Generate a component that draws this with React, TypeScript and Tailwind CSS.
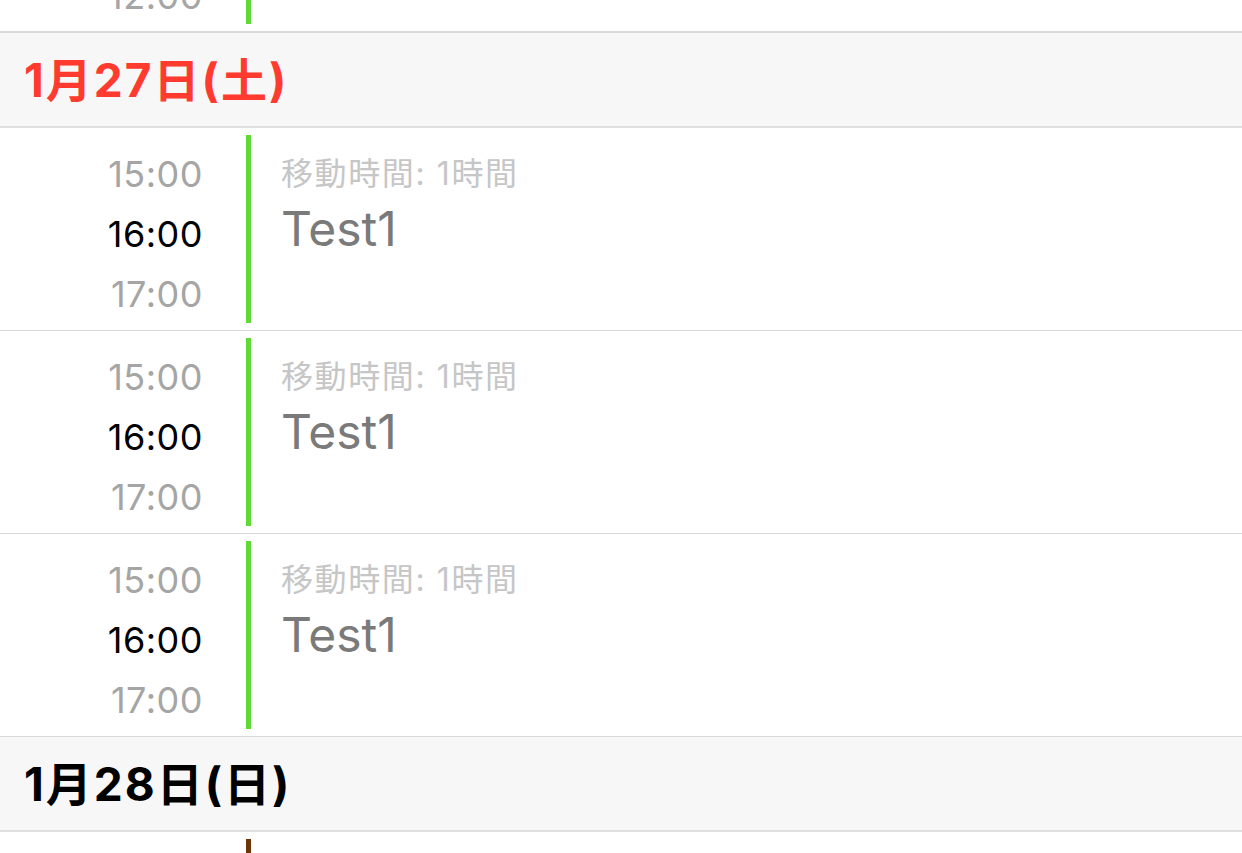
const FONT = { fontFamily: 'Inter, "Noto Sans CJK JP", sans-serif' };

type Event = {
  times: [string, string, string];
  travel: string;
  title: string;
  color: string;
};

const EventRow = ({ ev, className = "" }: { ev: Event; className?: string }) => (
  <div className={`flex h-[203px] bg-white border-b border-[#d9d9d9] ${className}`}>
    <div className="w-[203px] shrink-0 pt-[16px] text-right text-[36px] leading-[60px] tracking-[0.5px]">
      <div className="text-[#a5a5a5]">{ev.times[0]}</div>
      <div className="text-black">{ev.times[1]}</div>
      <div className="text-[#a5a5a5]">{ev.times[2]}</div>
    </div>
    <div className="ml-[43px] py-[7px]">
      <div className={`h-full w-[5px] ${ev.color}`} />
    </div>
    <div className="ml-[30px] pt-[16px]">
      <div className="text-[32px] leading-[60px] tracking-[1.6px] text-[#c6c6c6]">{ev.travel}</div>
      <div className="-mt-[3px] text-[48px] leading-[56px] text-[#7a7a7a]">{ev.title}</div>
    </div>
  </div>
);

const DayHeader = ({ label, red }: { label: string; red?: boolean }) => (
  <div className="flex h-[95px] items-center bg-[#f7f7f7] border-b-2 border-[#e0e0e0] px-[24px]">
    <span className={`pt-[2px] text-[46px] font-bold tracking-[2px] ${red ? "text-[#ff3b30]" : "text-black"}`}>
      {label}
    </span>
  </div>
);

export default function App() {
  const ev: Event = {
    times: ["15:00", "16:00", "17:00"],
    travel: "移動時間: 1時間",
    title: "Test1",
    color: "bg-[#5fd935]",
  };
  const earlier: Event = {
    times: ["10:00", "11:00", "12:00"],
    travel: "移動時間: 1時間",
    title: "Test1",
    color: "bg-[#5fd935]",
  };

  return (
    <div className="h-[853px] w-full overflow-hidden bg-white" style={FONT}>
      <EventRow ev={earlier} className="-mt-[170px] border-[#c8c8c8] border-b-2" />
      <DayHeader label="1月27日(土)" red />
      <EventRow ev={ev} />
      <EventRow ev={ev} />
      <EventRow ev={ev} />
      <DayHeader label="1月28日(日)" />
      <EventRow ev={{ ...ev, color: "bg-[#6e3508]" }} />
    </div>
  );
}
